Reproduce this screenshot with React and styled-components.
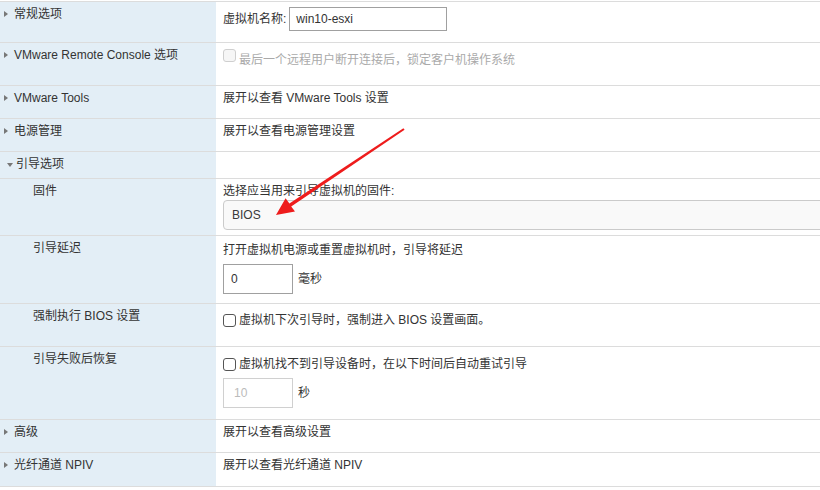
import React from 'react';
import styled, { createGlobalStyle } from 'styled-components';

const GlobalStyle = createGlobalStyle`
  html, body {
    margin: 0;
    padding: 0;
    background: #fff;
    overflow: hidden;
  }
  body {
    font-family: "Liberation Sans", "Noto Sans CJK SC", sans-serif;
    font-size: 12px;
    color: #333;
  }
`;

const Page = styled.div`
  position: relative;
  width: 820px;
  height: 490px;
  padding-top: 1px;
  box-sizing: border-box;
  overflow: hidden;
`;

const Table = styled.div`
  display: flex;
  flex-direction: column;
  border-bottom: 1px solid #dcdcdc;
`;

const Row = styled.div`
  display: grid;
  grid-template-columns: 216px 1fr;
  height: ${({ h }) => h}px;
  box-sizing: border-box;
  border-top: 1px solid #dcdcdc;
`;

const Label = styled.div`
  background: #e3eef6;
  padding: 4px 6px 0 ${({ sub }) => (sub ? 33 : 4)}px;
  display: flex;
  align-items: flex-start;
  line-height: 17px;
  white-space: nowrap;
`;

const Caret = styled.span`
  width: 0;
  height: 0;
  margin: ${({ open }) => (open ? '7px 3px 0 3px' : '5px 6px 0 0')};
  border-style: solid;
  border-color: transparent;
  ${({ open }) =>
    open
      ? 'border-width: 4px 3.5px 0 3.5px; border-top-color: #777;'
      : 'border-width: 3.5px 0 3.5px 4px; border-left-color: #777;'}
`;

const Value = styled.div`
  padding: 4px 0 0 7px;
  display: flex;
  flex-direction: column;
  align-items: flex-start;
  gap: 5px;
  line-height: 17px;
  white-space: nowrap;
`;

const Inline = styled.div`
  display: flex;
  align-items: center;
  gap: ${({ gap }) => gap || 4}px;
  margin-top: ${({ top }) => top || 0}px;
`;

const TextInput = styled.div`
  width: ${({ w }) => w}px;
  height: ${({ hgt }) => hgt}px;
  box-sizing: border-box;
  border: 1px solid ${({ disabled }) => (disabled ? '#d0d0d0' : '#a0a0a0')};
  color: ${({ disabled }) => (disabled ? '#bbb' : '#333')};
  padding-left: ${({ pl }) => pl}px;
  display: flex;
  align-items: center;
  background: #fff;
`;

const Select = styled.div`
  width: 640px;
  height: 30px;
  box-sizing: border-box;
  border: 1px solid #cbcbcb;
  border-radius: 4px;
  background: #f9f9f9;
  padding-left: 8px;
  display: flex;
  align-items: center;
  color: #3a3a3a;
`;

const Check = styled.span`
  width: 13px;
  height: 13px;
  box-sizing: border-box;
  border: 1px solid ${({ disabled }) => (disabled ? '#cfcfcf' : '#555')};
  border-radius: 3px;
  background: ${({ disabled }) => (disabled ? '#f6f6f6' : '#fff')};
  flex: none;
  ${({ raise }) => (raise ? 'align-self: flex-start; margin-top: -3px;' : '')}
`;

const Muted = styled.span`
  color: ${({ disabled }) => (disabled ? '#aaa' : '#333')};
`;

const Arrow = styled.svg`
  position: absolute;
  left: 0;
  top: 0;
  pointer-events: none;
`;

const App = () => {
  return (
    <>
      <GlobalStyle />
      <Page>
        <Table>
          <Row h={41}>
            <Label><Caret />常规选项</Label>
            <Value style={{ paddingTop: 5 }}>
              <Inline gap={3}>
                <span>虚拟机名称:</span>
                <TextInput w={158} hgt={24} pl={6}>win10-esxi</TextInput>
              </Inline>
            </Value>
          </Row>
          <Row h={43}>
            <Label><Caret />VMware Remote Console 选项</Label>
            <Value>
              <Inline gap={3} top={5}>
                <Check disabled raise />
                <Muted disabled>最后一个远程用户断开连接后，锁定客户机操作系统</Muted>
              </Inline>
            </Value>
          </Row>
          <Row h={33}>
            <Label><Caret />VMware Tools</Label>
            <Value>展开以查看 VMware Tools 设置</Value>
          </Row>
          <Row h={33}>
            <Label><Caret />电源管理</Label>
            <Value>展开以查看电源管理设置</Value>
          </Row>
          <Row h={27}>
            <Label><Caret open />引导选项</Label>
            <Value />
          </Row>
          <Row h={57}>
            <Label sub>固件</Label>
            <Value style={{ gap: 0 }}>
              <span>选择应当用来引导虚拟机的固件:</span>
              <Select>BIOS</Select>
            </Value>
          </Row>
          <Row h={68}>
            <Label sub>引导延迟</Label>
            <Value>
              <span style={{ marginTop: 2 }}>打开虚拟机电源或重置虚拟机时，引导将延迟</span>
              <Inline gap={5}>
                <TextInput w={70} hgt={30} pl={7}>0</TextInput>
                <span>毫秒</span>
              </Inline>
            </Value>
          </Row>
          <Row h={43}>
            <Label sub>强制执行 BIOS 设置</Label>
            <Value>
              <Inline gap={3} top={4}>
                <Check />
                <Muted>虚拟机下次引导时，强制进入 BIOS 设置画面。</Muted>
              </Inline>
            </Value>
          </Row>
          <Row h={73}>
            <Label sub>引导失败后恢复</Label>
            <Value>
              <Inline gap={3} top={5}>
                <Check />
                <Muted>虚拟机找不到引导设备时，在以下时间后自动重试引导</Muted>
              </Inline>
              <Inline gap={5}>
                <TextInput w={70} hgt={30} pl={10} disabled>10</TextInput>
                <span>秒</span>
              </Inline>
            </Value>
          </Row>
          <Row h={33}>
            <Label><Caret />高级</Label>
            <Value>展开以查看高级设置</Value>
          </Row>
          <Row h={34}>
            <Label><Caret />光纤通道 NPIV</Label>
            <Value>展开以查看光纤通道 NPIV</Value>
          </Row>
        </Table>
        <Arrow width="820" height="490" viewBox="0 0 820 490">
          <polygon
            fill="#ee1c1c"
            points="404.6,129.8 403.4,128.2 289.4,203.4 285.6,198.3 276,215 295,211.6 291.2,206.4"
          />
        </Arrow>
      </Page>
    </>
  );
};

export default App;
